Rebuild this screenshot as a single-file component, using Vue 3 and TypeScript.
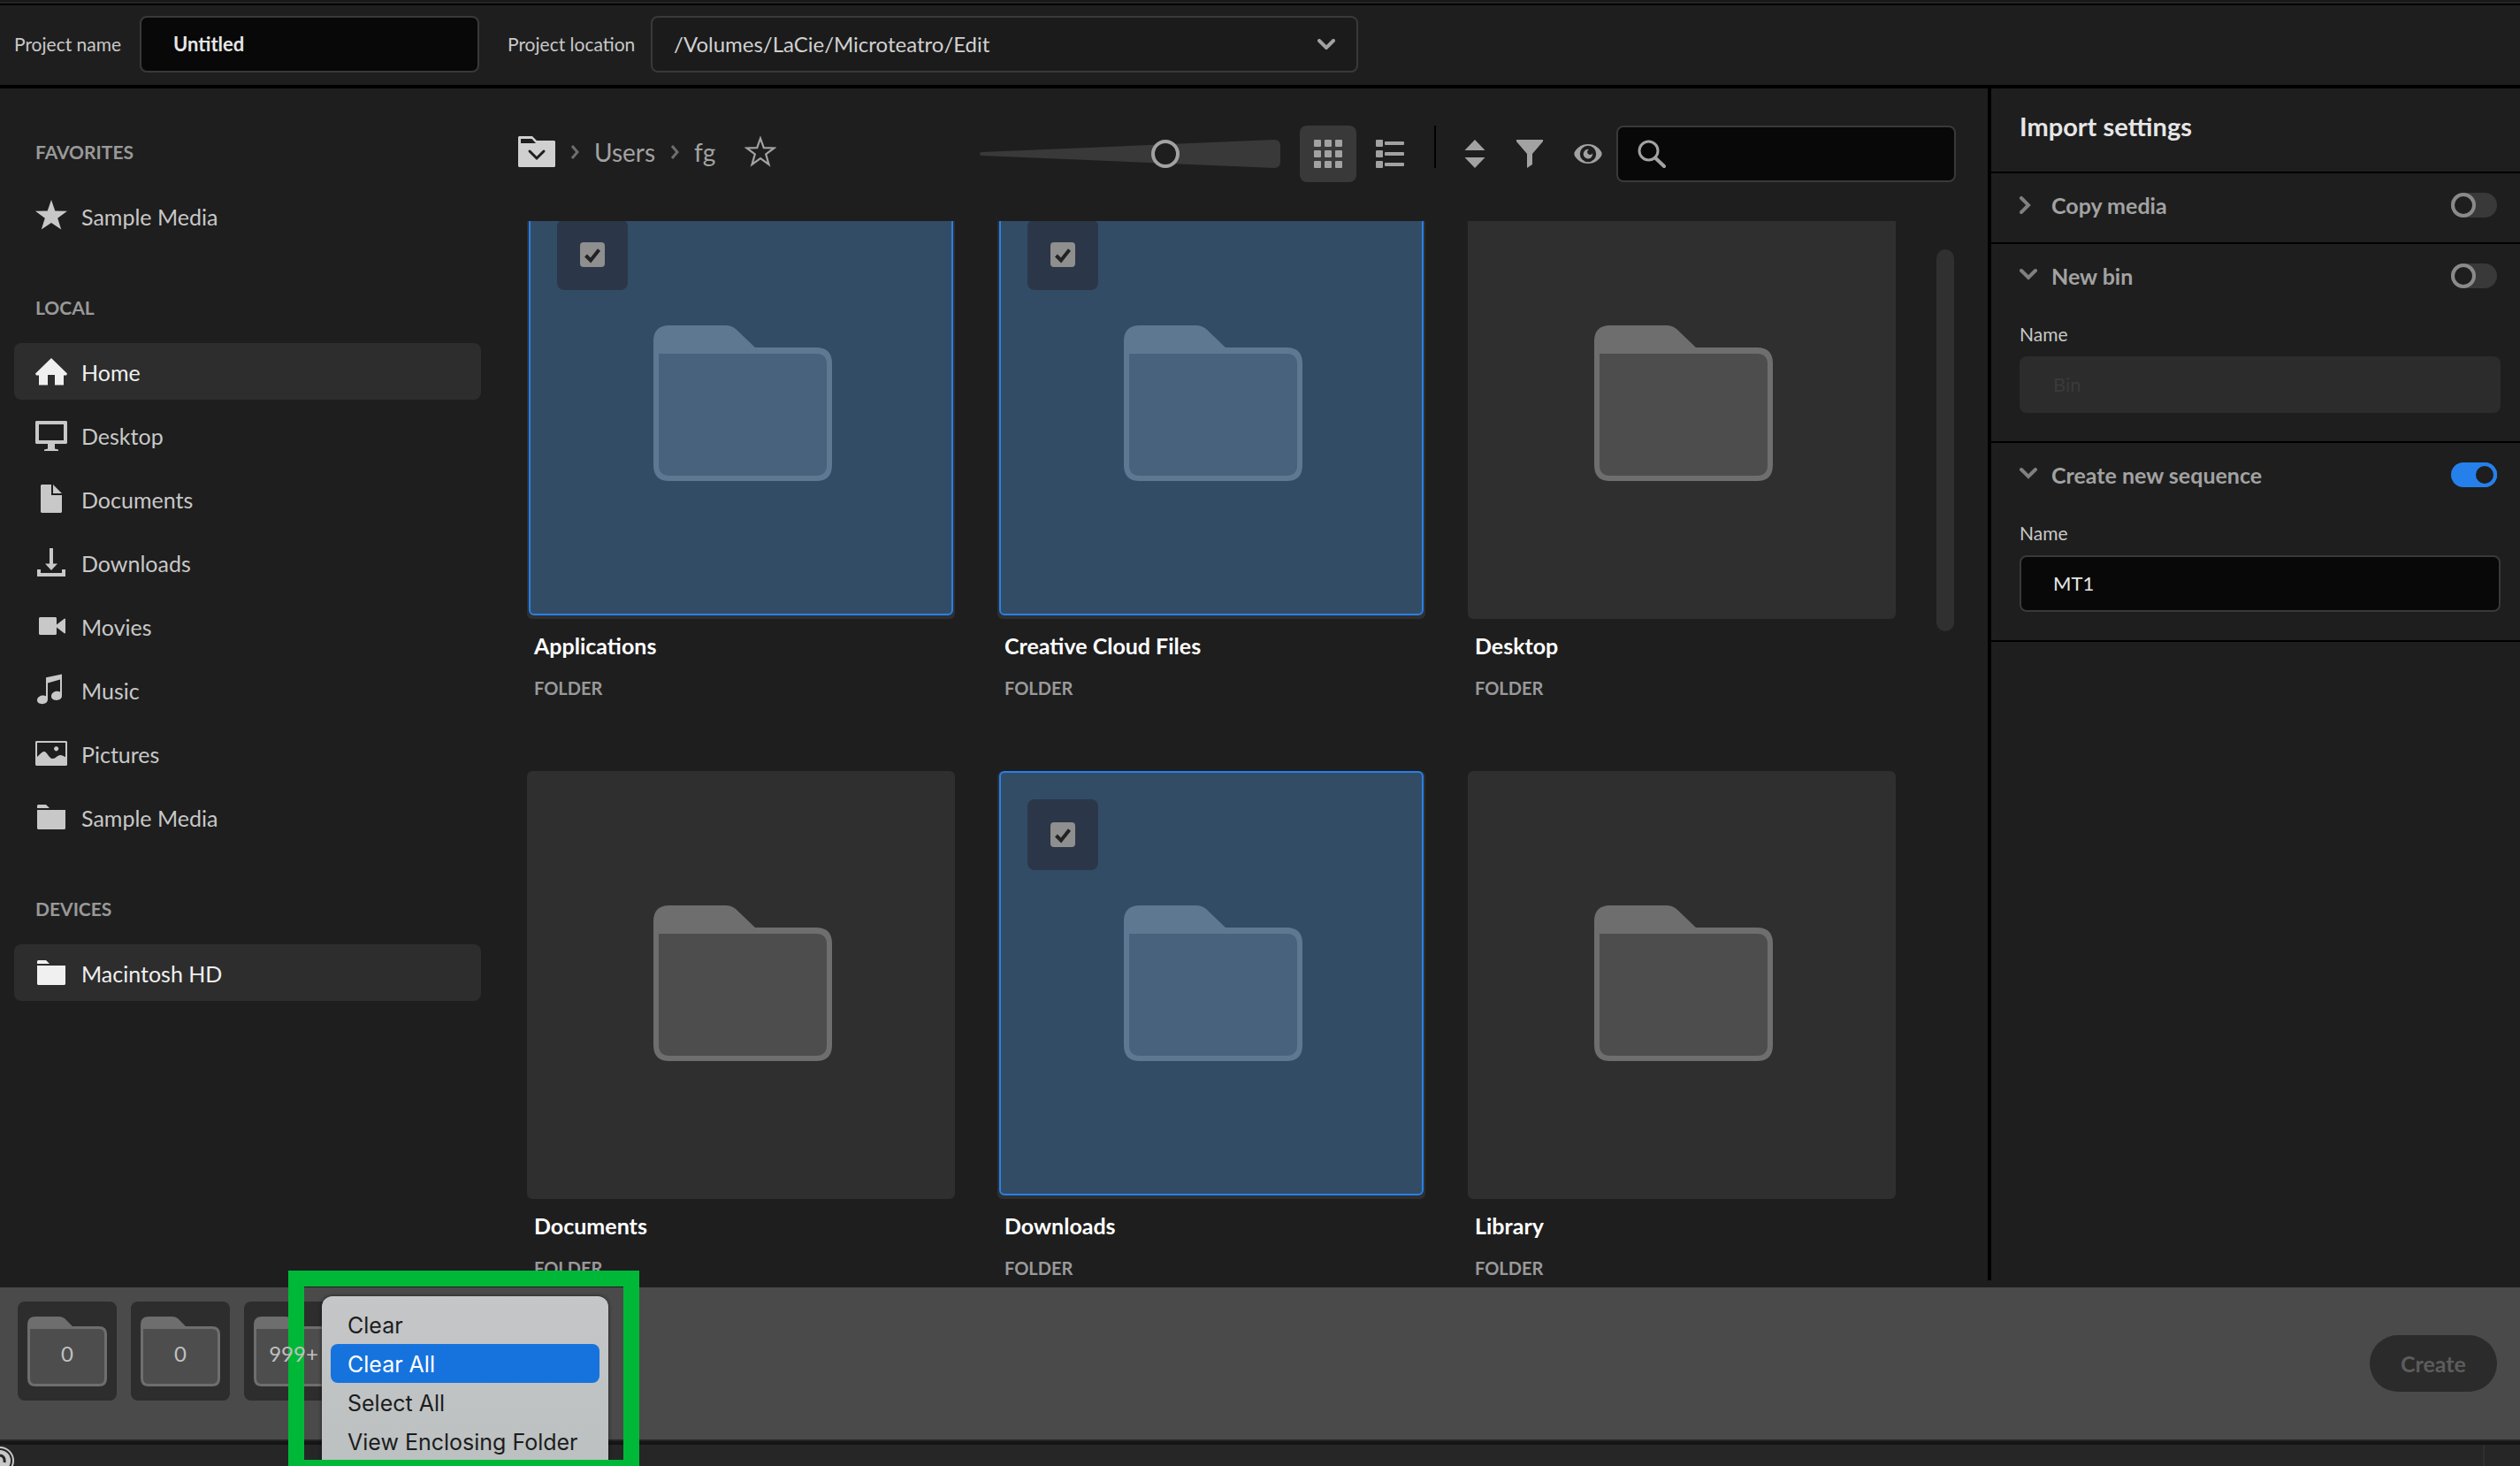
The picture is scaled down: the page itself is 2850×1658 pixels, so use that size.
<script setup lang="ts">
import { ref } from 'vue'

type IconName =
  | 'star' | 'home' | 'desktop' | 'document' | 'download'
  | 'movie' | 'music' | 'picture' | 'folder'

interface Place { label: string; icon: IconName; active?: boolean }
interface PlaceGroup { title: string; items: Place[] }
interface Tile { name: string; kind: string; selected: boolean }

const iconPaths: Record<IconName, string> = {
  star: 'M18 0 22.300 12.500 36 12.700 25.200 20.800 29.200 33.500 18 26 6.800 33.500 10.800 20.800 0 12.700 13.700 12.500Z',
  home: 'M18 3 36 20.500 35 22.500H32V33.500H22V22H14V33.500H4V22.500H1L0 20.500Z',
  desktop: 'M1 2H35L36 3V27L35 28H22V33.500L26 34.500V36H10V34.500L14 33.500V28H1L0 27V3ZM4 6V24H32V6Z',
  document: 'M7 2H18V14H30V33L29 34H7L6 33V3ZM20 2 30 12H20Z',
  download: 'M16 2H20V19.500H25L18 27 11 19.500H16ZM2 26H6V30H30V26H34V34H2Z',
  movie: 'M5 8H23L24 9V16.500L33 9.500 34 10V26L33 26.500 24 19.500V27L23 28H5L4 27V9Z',
  music: 'M12 4.200 30 .6V25C30 31.300 18 31.600 18 25.500 18 20.400 24.500 18.800 28 20.500V6.600L14 10.400V29C14 35.600 2 35.800 2 30 2 25.200 8.500 23.500 12 25.200Z',
  picture: 'M1 4H35L36 5V31L35 32H1L0 31V5ZM2 6V22C6 18.500 7.500 16 10 16 13 16 15.500 24 19.500 24 23 24 25 20 28 20 30.500 20 32 21.500 34 22V6ZM23.700 10.200A2.600 2.600 0 1 1 23.600 10.200Z',
  folder: 'M3 4H12L16 8H2V5ZM2 10H34V31L33 32H3L2 31Z',
}

const groups: PlaceGroup[] = [
  { title: 'FAVORITES', items: [{ label: 'Sample Media', icon: 'star' }] },
  {
    title: 'LOCAL',
    items: [
      { label: 'Home', icon: 'home', active: true },
      { label: 'Desktop', icon: 'desktop' },
      { label: 'Documents', icon: 'document' },
      { label: 'Downloads', icon: 'download' },
      { label: 'Movies', icon: 'movie' },
      { label: 'Music', icon: 'music' },
      { label: 'Pictures', icon: 'picture' },
      { label: 'Sample Media', icon: 'folder' },
    ],
  },
  { title: 'DEVICES', items: [{ label: 'Macintosh HD', icon: 'folder', active: true }] },
]

const tiles = ref<Tile[]>([
  { name: 'Applications', kind: 'FOLDER', selected: true },
  { name: 'Creative Cloud Files', kind: 'FOLDER', selected: true },
  { name: 'Desktop', kind: 'FOLDER', selected: false },
  { name: 'Documents', kind: 'FOLDER', selected: false },
  { name: 'Downloads', kind: 'FOLDER', selected: true },
  { name: 'Library', kind: 'FOLDER', selected: false },
])

const projectName = ref('Untitled')
const projectLocation = ref('/Volumes/LaCie/Microteatro/Edit')
const zoomLevel = ref(63)
const query = ref('')
const copyMedia = ref(false)
const newBin = ref(false)
const binName = ref('Bin')
const newSequence = ref(true)
const sequenceName = ref('MT1')
const counts = ['0', '0', '999+']
const menuItems = ['Clear', 'Clear All', 'Select All', 'View Enclosing Folder']
const activeMenuItem = ref('Clear All')
</script>

<template>
  <div class="app">
    <header class="topbar">
      <label class="label name-label" for="project-name">Project name</label>
      <input id="project-name" v-model="projectName" class="field project-name" type="text" />
      <label class="label location-label" for="project-location">Project location</label>
      <div class="select-box">
        <select id="project-location" v-model="projectLocation">
          <option>/Volumes/LaCie/Microteatro/Edit</option>
        </select>
        <svg class="select-arrow" viewBox="0 0 20 12" aria-hidden="true">
          <path d="M2 2 10 10 18 2" fill="none" stroke="currentColor" stroke-width="4" stroke-linecap="round" />
        </svg>
      </div>
    </header>

    <div class="body">
      <nav class="sidebar">
        <section v-for="group in groups" :key="group.title" class="group">
          <h2>{{ group.title }}</h2>
          <ul>
            <li v-for="item in group.items" :key="item.label">
              <a href="#" class="place" :class="{ active: item.active }">
                <svg viewBox="0 0 36 36" aria-hidden="true">
                  <path :d="iconPaths[item.icon]" fill="currentColor" fill-rule="evenodd" />
                </svg>
                <span>{{ item.label }}</span>
              </a>
            </li>
          </ul>
        </section>
      </nav>

      <main class="browser">
        <div class="toolbar">
          <div class="crumbs">
            <button type="button" class="icon-btn" aria-label="Locations">
              <svg width="42" height="36" viewBox="0 0 42 36">
                <path d="M1 0H16L21 5H41L42 6V34L41 35H1L0 34V1ZM3 3V8H20L15.500 3Z" fill="#d0d0d0" fill-rule="evenodd" />
                <path d="M13 17 21 25 29 17" fill="none" stroke="#1e1e1e" stroke-width="3" stroke-linecap="round" />
              </svg>
            </button>
            <svg class="crumb-arrow" viewBox="0 0 10 16"><path d="M2 1 8 8 2 15" /></svg>
            <a href="#">Users</a>
            <svg class="crumb-arrow" viewBox="0 0 10 16"><path d="M2 1 8 8 2 15" /></svg>
            <a href="#">fg</a>
            <button type="button" class="icon-btn favorite" aria-label="Add to favorites">
              <svg width="36" height="36" viewBox="0 0 36 36">
                <path d="M18 2.500 21.800 13.200 33.500 13.500 24.200 20.400 27.500 32 18 25.200 8.500 32 11.800 20.400 2.500 13.500 14.200 13.200Z" fill="none" stroke="#a2a2a2" stroke-width="2.200" />
              </svg>
            </button>
          </div>

          <div class="zoom">
            <svg viewBox="0 0 340 32" preserveAspectRatio="none" aria-hidden="true">
              <path d="M2 14 333 0Q340 0 340 7V25Q340 32 333 32L2 18Q0 18 0 16T2 14Z" fill="#393939" />
            </svg>
            <input v-model="zoomLevel" type="range" min="0" max="100" aria-label="Thumbnail size" />
          </div>

          <button type="button" class="view-btn on" aria-label="Grid view">
            <svg width="32" height="32" viewBox="0 0 32 32" fill="currentColor">
              <template v-for="r in 3" :key="r">
                <rect v-for="c in 3" :key="c" :x="(c - 1) * 12" :y="(r - 1) * 12" width="8" height="8" rx="1" />
              </template>
            </svg>
          </button>
          <button type="button" class="view-btn" aria-label="List view">
            <svg width="32" height="32" viewBox="0 0 32 32" fill="currentColor">
              <template v-for="r in 3" :key="r">
                <rect x="0" :y="(r - 1) * 12" width="8" height="8" rx="1" />
                <rect x="10" :y="(r - 1) * 12 + 2" width="22" height="4" rx="1" />
              </template>
            </svg>
          </button>
          <span class="divider"></span>
          <button type="button" class="icon-btn sort" aria-label="Sort">
            <svg width="24" height="32" viewBox="0 0 24 32" fill="currentColor">
              <path d="M12 0 23.500 12H.5ZM.5 20H23.500L12 32Z" />
            </svg>
          </button>
          <button type="button" class="icon-btn tool" aria-label="Filter">
            <svg width="32" height="32" viewBox="0 0 32 32" fill="currentColor">
              <path d="M1 0H31V2L19 16V28L13 32V16L1 2Z" />
            </svg>
          </button>
          <button type="button" class="icon-btn tool" aria-label="Preview">
            <svg width="32" height="24" viewBox="0 0 32 24">
              <path d="M16 1C24 1 29 6 31.500 10.500V13.500C29 18 24 23 16 23S3 18 .5 13.500V10.500C3 6 8 1 16 1ZM16 2.800A9.200 9.200 0 1 0 16 21.200 9.200 9.200 0 1 0 16 2.800Z" fill="currentColor" fill-rule="evenodd" />
              <path d="M17 6.900A3.200 3.200 0 1 0 21.200 11.200 5.300 5.300 0 1 1 17 6.900Z" fill="currentColor" />
            </svg>
          </button>
          <div class="search">
            <svg width="32" height="32" viewBox="0 0 32 32" fill="none" stroke="currentColor" aria-hidden="true">
              <circle cx="12.500" cy="12.500" r="10.500" stroke-width="3" />
              <path d="M20.500 21 30 30" stroke-width="4" stroke-linecap="round" />
            </svg>
            <input v-model="query" type="search" aria-label="Search" />
          </div>
        </div>

        <div class="listing">
          <ul class="grid">
            <li v-for="tile in tiles" :key="tile.name">
              <div class="thumb" :class="{ selected: tile.selected }">
                <label v-if="tile.selected" class="tick">
                  <input v-model="tile.selected" type="checkbox" :aria-label="tile.name" />
                  <svg viewBox="0 0 28 28" aria-hidden="true">
                    <path d="M6.500 15 12 20.500 21.500 8.500" fill="none" stroke="#222" stroke-width="4" />
                  </svg>
                </label>
                <svg class="folder" viewBox="0 0 202 176" aria-hidden="true">
                  <path class="outer" d="M18 0H82Q88 0 93 4L115 25H184Q202 25 202 43V158Q202 176 184 176H18Q0 176 0 158V18Q0 0 18 0Z" />
                  <path class="inner" d="M6 32H184Q196 32 196 44V158Q196 170 184 170H18Q6 170 6 158Z" />
                </svg>
              </div>
              <p class="name">{{ tile.name }}</p>
              <p class="kind">{{ tile.kind }}</p>
            </li>
          </ul>
          <div class="scroll-thumb"></div>
        </div>
      </main>

      <aside class="settings">
        <h1>Import settings</h1>
        <section class="option">
          <div class="option-head">
            <svg class="caret" viewBox="0 0 20 20"><path d="M2 2 10 10 2 18" /></svg>
            <label for="copy-media">Copy media</label>
            <input id="copy-media" v-model="copyMedia" type="checkbox" role="switch" class="switch" />
          </div>
        </section>
        <section class="option">
          <div class="option-head">
            <svg class="caret" viewBox="0 0 20 20"><path d="M2 4 10 12 18 4" /></svg>
            <label for="new-bin">New bin</label>
            <input id="new-bin" v-model="newBin" type="checkbox" role="switch" class="switch" />
          </div>
          <div class="option-body">
            <label class="label" for="bin-name">Name</label>
            <input id="bin-name" v-model="binName" class="field" type="text" disabled />
          </div>
        </section>
        <section class="option">
          <div class="option-head">
            <svg class="caret" viewBox="0 0 20 20"><path d="M2 4 10 12 18 4" /></svg>
            <label for="new-sequence">Create new sequence</label>
            <input id="new-sequence" v-model="newSequence" type="checkbox" role="switch" class="switch" />
          </div>
          <div class="option-body">
            <label class="label" for="sequence-name">Name</label>
            <input id="sequence-name" v-model="sequenceName" class="field" type="text" />
          </div>
        </section>
      </aside>
    </div>

    <footer class="tray">
      <div v-for="(count, i) in counts" :key="i" class="stack">
        <svg viewBox="0 0 90 79" aria-hidden="true">
          <path d="M9 0H36Q39 0 42 2L51 11H81Q90 11 90 20V70Q90 79 81 79H9Q0 79 0 70V9Q0 0 9 0Z" fill="#6e6e6e" />
          <path d="M3 14H81Q87 14 87 20V70Q87 76 81 76H9Q3 76 3 70Z" fill="#4d4d4d" />
        </svg>
        <span>{{ count }}</span>
      </div>
      <button type="button" class="create" disabled>Create</button>
    </footer>
    <div class="status">
      <svg class="cloud" viewBox="0 0 18 24" aria-hidden="true">
        <circle cx="0" cy="18" r="15" fill="#262626" stroke="#c8c8c8" stroke-width="2" />
        <circle cx="0" cy="18" r="12" fill="#c8c8c8" />
        <path d="M0 12Q6 13 5 20" fill="none" stroke="#262626" stroke-width="3" />
      </svg>
      <span class="status-line"></span>
    </div>

    <div class="highlight">
      <div class="menu" role="menu">
        <button
          v-for="item in menuItems"
          :key="item"
          type="button"
          role="menuitem"
          :class="{ current: item === activeMenuItem }"
        >{{ item }}</button>
      </div>
    </div>
  </div>
</template>

<style>
body {
  margin: 0;
  background: #1e1e1e;
}
</style>

<style scoped>
* {
  box-sizing: border-box;
}

.app {
  position: relative;
  display: flex;
  flex-direction: column;
  height: 100vh;
  overflow: hidden;
  background: #1e1e1e;
  color: #c8c8c8;
  font-family: Lato, "Open Sans", sans-serif;
  font-size: 24px;
}

ul, p, h1, h2 {
  margin: 0;
  padding: 0;
  list-style: none;
}

button, input, select {
  font: inherit;
  margin: 0;
}

button {
  padding: 0;
  border: 0;
  background: none;
  color: inherit;
}

svg {
  display: block;
  flex: none;
}

a {
  color: inherit;
  text-decoration: none;
}

.label {
  font-size: 21px;
  line-height: 28px;
  white-space: nowrap;
  color: #c8c8c8;
}

.field {
  height: 64px;
  padding: 0 36px 2px;
  border: 2px solid #393939;
  border-radius: 8px;
  outline: 0;
  background: #080808;
  color: #e6e6e6;
  font-size: 22px;
}

.field:disabled {
  border-color: #2c2c2c;
  background: #2c2c2c;
  color: #3a3a3a;
}

/* Top bar */
.topbar {
  display: flex;
  flex: none;
  align-items: center;
  gap: 16px;
  height: 100px;
  padding: 2px 16px 0;
  border-top: 2px solid #181818;
  border-bottom: 4px solid #000;
  box-shadow: inset 0 2px #242424, inset 0 4px #000;
}

.name-label {
  width: 126px;
}

.project-name {
  width: 384px;
  font-weight: 700;
}

.location-label {
  width: 146px;
  margin-left: 16px;
}

.select-box {
  display: grid;
  width: 800px;
  align-items: center;
}

.select-box > * {
  grid-area: 1 / 1;
}

.select-box select {
  height: 64px;
  padding: 0 24px 2px;
  border: 2px solid #393939;
  border-radius: 8px;
  appearance: none;
  background: #1b1b1b;
  color: #d0d0d0;
}

.select-arrow {
  width: 20px;
  margin-right: 26px;
  justify-self: end;
  color: #a2a2a2;
  pointer-events: none;
}

/* Body */
.body {
  display: flex;
  flex: 1;
  min-height: 0;
}

.sidebar {
  flex: none;
  width: 560px;
  padding: 0 16px;
}

.group {
  padding-top: 60px;
}

.group h2 {
  margin: 0 0 28px 24px;
  font-size: 21px;
  line-height: 24px;
  color: #999;
}

.group ul {
  display: grid;
  gap: 8px;
}

.place {
  display: flex;
  align-items: center;
  gap: 16px;
  height: 64px;
  padding: 0 24px;
  border-radius: 8px;
  font-size: 25px;
}

.place.active {
  background: #2d2d2d;
  color: #f0f0f0;
}

.place svg {
  width: 36px;
}

.place span {
  padding-top: 2px;
}

/* Browser */
.browser {
  display: flex;
  flex: 1;
  flex-direction: column;
  min-width: 0;
  padding-right: 36px;
}

.toolbar {
  display: flex;
  align-items: center;
  height: 64px;
  margin: 42px 0 44px;
  padding-left: 26px;
}

.crumbs {
  display: flex;
  flex: 1;
  align-items: center;
  gap: 17px;
  padding-bottom: 4px;
  color: #a2a2a2;
  font-size: 28px;
}

.crumb-arrow {
  width: 10px;
  fill: none;
  stroke: #6e6e6e;
  stroke-width: 3;
}

.favorite {
  margin-left: 16px;
}

.icon-btn {
  display: grid;
  place-items: center;
  color: #a2a2a2;
}

.zoom {
  display: grid;
  width: 340px;
  margin-right: 22px;
}

.zoom > * {
  grid-area: 1 / 1;
  width: 100%;
  height: 32px;
}

.zoom input {
  appearance: none;
  background: none;
}

.zoom input::-webkit-slider-thumb {
  appearance: none;
  width: 32px;
  height: 32px;
  border: 4px solid #a2a2a2;
  border-radius: 50%;
  background: #1e1e1e;
}

.view-btn {
  display: grid;
  place-items: center;
  width: 64px;
  height: 64px;
  border-radius: 8px;
  color: #a2a2a2;
}

.view-btn.on {
  margin-right: 6px;
  background: #393939;
}

.divider {
  align-self: flex-start;
  width: 2px;
  height: 48px;
  margin: 0 32px 0 18px;
  background: #000;
}

.tool {
  margin-left: 34px;
}

.search {
  display: flex;
  align-items: center;
  width: 384px;
  height: 64px;
  margin-left: 16px;
  padding-left: 22px;
  border: 2px solid #393939;
  border-radius: 8px;
  background: #080808;
  color: #a2a2a2;
}

.search input {
  flex: 1;
  min-width: 0;
  height: 56px;
  padding: 0 16px;
  border: 0;
  outline: 0;
  background: none;
  color: #e6e6e6;
}

.listing {
  display: flex;
  flex: 1;
  align-items: flex-start;
  gap: 46px;
  min-height: 0;
  padding-left: 36px;
  overflow: hidden;
}

.grid {
  display: grid;
  flex: 1;
  grid-template-columns: repeat(3, 1fr);
  gap: 82px 48px;
  margin-top: -34px;
}

.thumb {
  position: relative;
  display: grid;
  place-items: center;
  aspect-ratio: 1;
  padding: 0 0 4px 4px;
  border-radius: 6px;
  background: #2f2f2f;
}

.thumb.selected::before {
  content: "";
  position: absolute;
  inset: 0 2px 4px 2px;
  border: 2px solid #2680eb;
  border-radius: 6px;
  background: #324c66;
}

.tick {
  position: absolute;
  top: 32px;
  left: 34px;
  display: grid;
  place-items: center;
  place-content: center;
  width: 80px;
  height: 80px;
  border-radius: 8px;
  background: #2b3748;
}

.tick > * {
  grid-area: 1 / 1;
  width: 28px;
  height: 28px;
}

.tick input {
  appearance: none;
  border-radius: 4px;
  background: #8f8f8f;
}

.tick svg {
  z-index: 1;
  pointer-events: none;
}

.folder {
  z-index: 1;
  width: 202px;
}

.outer {
  fill: #6e6e6e;
}

.inner {
  fill: #4d4d4d;
}

.selected .outer {
  fill: #5f7892;
}

.selected .inner {
  fill: #48617c;
}

.name {
  padding: 14px 8px 0;
  font-size: 25px;
  font-weight: 700;
  line-height: 32px;
  color: #fff;
}

.kind {
  padding: 20px 8px 0;
  font-size: 20px;
  font-weight: 700;
  line-height: 24px;
  color: #999;
}

.scroll-thumb {
  flex: none;
  width: 20px;
  height: 432px;
  margin: 32px 2px 0 0;
  border-radius: 10px;
  background: #303030;
}

/* Import settings */
.settings {
  flex: none;
  width: 602px;
  margin-bottom: 8px;
  border-left: 4px solid #000;
}

.settings h1 {
  height: 96px;
  padding-left: 32px;
  border-bottom: 2px solid #000;
  font-size: 29px;
  line-height: 86px;
  color: #e6e6e6;
}

.option {
  border-bottom: 2px solid #000;
}

.option-head {
  display: flex;
  align-items: center;
  height: 78px;
  padding: 0 26px 6px 32px;
}

.option-head label {
  flex: 1;
  margin-left: 16px;
  font-size: 25px;
  font-weight: 700;
  color: #a2a2a2;
}

.caret {
  width: 20px;
  fill: none;
  stroke: #808080;
  stroke-width: 4;
  stroke-linecap: round;
}

.switch {
  width: 52px;
  height: 28px;
  border-radius: 14px;
  appearance: none;
  background: #393939;
}

.switch::before {
  content: "";
  display: block;
  width: 28px;
  height: 28px;
  box-sizing: border-box;
  border: 4px solid #8a8a8a;
  border-radius: 50%;
  background: #1e1e1e;
}

.switch:checked {
  background: #2680eb;
}

.switch:checked::before {
  margin-left: 24px;
  border-color: #2680eb;
}

.option-body {
  display: flex;
  flex-direction: column;
  gap: 11px;
  padding: 10px 22px 32px 32px;
}

/* Tray */
.tray {
  display: flex;
  flex: none;
  align-items: flex-start;
  gap: 16px;
  height: 172px;
  padding: 16px 26px 0 20px;
  background: #4a4a4a;
}

.stack {
  display: grid;
  place-items: center;
  place-content: center;
  width: 112px;
  height: 112px;
  border-radius: 8px;
  background: #2d2d2d;
}

.stack > * {
  grid-area: 1 / 1;
}

.stack svg {
  width: 90px;
}

.stack span {
  z-index: 1;
  padding-top: 4px;
  color: #c0c0c0;
}

.create {
  width: 144px;
  height: 64px;
  margin: 38px 0 0 auto;
  border-radius: 32px;
  background: #2b2b2b;
  color: #5c5c5c;
  font-size: 25px;
  font-weight: 700;
}

.status {
  display: flex;
  flex: none;
  justify-content: space-between;
  height: 30px;
  padding: 6px 40px 0 0;
  background: #262626;
  box-shadow: inset 0 2px #242424, inset 0 6px #151515;
}

.cloud {
  width: 18px;
}

.status-line {
  width: 2px;
  background: #2f2f2f;
}

/* Context menu and its frame */
.highlight {
  position: absolute;
  bottom: -11px;
  left: 326px;
  width: 397px;
  height: 232px;
  padding: 11px 17px 0 20px;
  border: 18px solid #00b838;
  overflow: hidden;
}

.menu {
  height: 240px;
  padding: 10px;
  border-radius: 12px;
  background: linear-gradient(#c5c6c8, #b9bfbe);
  box-shadow: 0 0 4px rgba(0, 0, 0, 0.6);
}

.menu button {
  display: block;
  width: 100%;
  height: 44px;
  padding: 2px 19px 0;
  border-radius: 8px;
  color: #1c1d1e;
  font-family: Inter, "Liberation Sans", sans-serif;
  font-size: 25px;
  text-align: left;
  white-space: nowrap;
}

.menu button.current {
  background: #1673de;
  color: #fff;
}
</style>
